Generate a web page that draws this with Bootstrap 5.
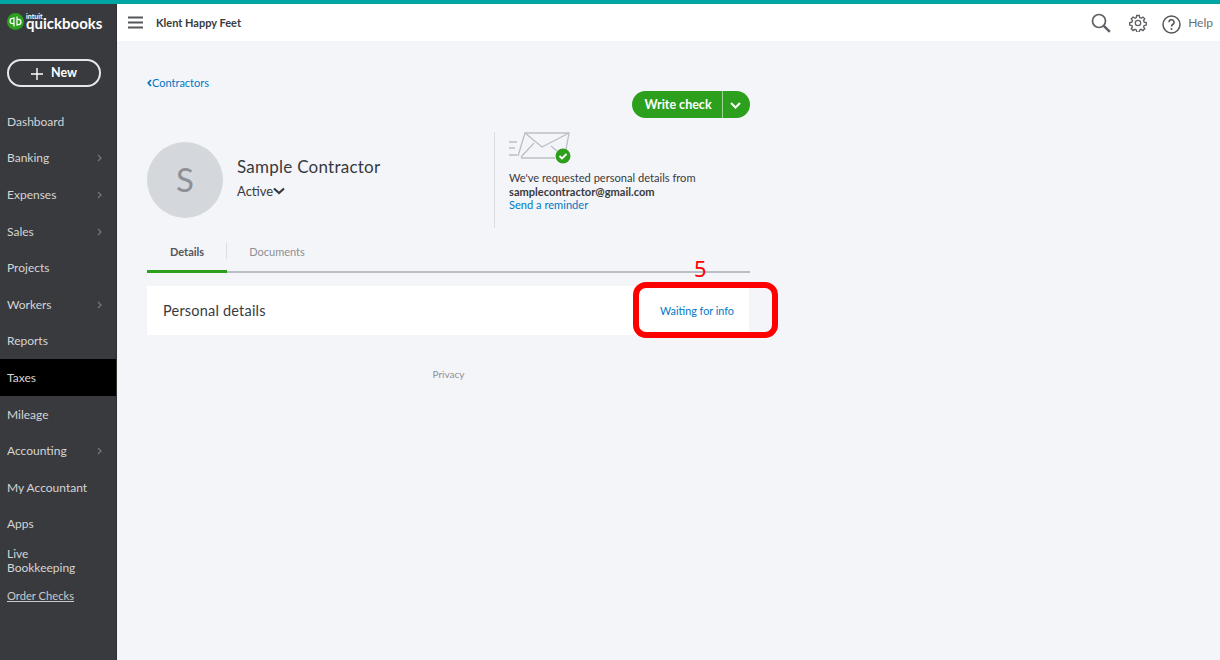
<!DOCTYPE html>
<html lang="en">
<head>
  <meta charset="UTF-8">
  <meta name="viewport" content="width=device-width, initial-scale=1.0">
  <title>Sample Contractor</title>
  <link href="https://cdn.jsdelivr.net/npm/bootstrap@5.3.0/dist/css/bootstrap.min.css" rel="stylesheet">
  <style>
    html, body { height: 100%; margin: 0; overflow: hidden; }
    body { font-family: "Lato", "Liberation Sans", sans-serif; background: #f4f5f8; color: #393a3d; position: relative; }
    .teal-strip { height: 4px; background: #00a6a4; }
    .app-shell { height: 656px; }
    .side-bar { width: 117px; background: #393a3d; border-right: 1px solid #2f3033; }
    .brand-row { height: 37px; padding: 9px 0 0 7px; color: #fff; }
    .qb-word { font-size: 15px; font-weight: 700; line-height: 14px; margin-left: 2px; }
    .qb-intuit { font-size: 7px; line-height: 6px; display: block; font-weight: 700; margin-bottom: -3px; }
    .new-btn { width: 94px; height: 28px; margin: 18px 0 16px 7px; border: 2px solid #e6e7e9; border-radius: 14px; color: #fff; font-size: 12.500px; font-weight: 700; padding: 1px 0 0; }
    .new-btn:hover { color: #fff; }
    .side-link { height: 36.6px; padding: 1px 14px 0 7px; color: #d4d5d7; font-size: 12px; text-decoration: none; }
    .side-link.is-on { background: #000; }
    .side-link.two-line { height: 38px; line-height: 14px; padding-top: 0; }
    .side-foot { color: #c8c9cb; font-size: 11.200px; text-decoration: underline; margin: 8px 0 0 7px; display: block; }
    .top-bar { height: 37px; background: #fff; padding: 0 7px 0 11px; }
    .firm-name { font-size: 11px; font-weight: 700; margin: 2px 0 0 13px; color: #393a3d; }
    .gear-icon { margin: 0 15px 0 18px; }
    .help-word { font-size: 12px; color: #6b6c72; margin-left: 7px; }
    .page-col { width: 603px; margin-left: 30px; }
    .back-link { color: #0077c5; font-size: 11px; text-decoration: none; display: block; line-height: 14px; margin-top: 35px; }
    .write-group { width: 118px; height: 27px; margin-top: 1px; }
    .write-main { background: #2ca01c; color: #fff; border: 0; height: 27px; width: 90px; border-radius: 14px 0 0 14px; font-size: 12.500px; font-weight: 700; padding: 1px 0 0 2px; }
    .write-drop { background: #2ca01c; border: 0; border-left: 1px solid #9ed397; height: 27px; width: 28px; border-radius: 0 14px 14px 0; padding: 0 3px 2px 0; }
    .profile-row { height: 96px; margin-top: 14px; }
    .avatar-disc { width: 76px; height: 76px; border-radius: 50%; background: #d4d7dc; color: #8d9096; font-size: 33px; margin-top: 10px; }
    .who-col { margin-left: 14px; padding-top: 24px; width: 257px; }
    .who-name { font-size: 17px; font-weight: 400; line-height: 22px; margin: 0; letter-spacing: .25px; }
    .who-state { font-size: 13px; line-height: 16px; margin-top: 5px; }
    .ask-col { border-left: 1px solid #dcdde0; padding-left: 14px; font-size: 11.100px; line-height: 13.500px; flex: 1; }
    .ask-col a { color: #0077c5; text-decoration: none; }
    .ask-mail { font-weight: 700; color: #393a3d; }
    .ask-gap { margin-top: 6px; }
    .tab-row { height: 32px; margin-top: 13px; border-bottom: 2px solid #babec5; }
    .tab-item { width: 80px; height: 32px; font-size: 11px; text-align: center; color: #8d9096; padding-top: 3px; }
    .tab-item.is-second { margin-left: 10px; }
    .tab-item.is-on { color: #53555a; font-weight: 700; border-bottom: 3px solid #2ca01c; position: relative; }
    .tab-item.is-on::after { content: ""; position: absolute; right: 0; top: 2px; height: 16px; border-right: 1px solid #dcdde0; }
    .detail-box { height: 49px; background: #fff; margin: 13px 1px 0 0; padding: 1px 15px 0 16px; }
    .detail-title { font-size: 14.500px; letter-spacing: .2px; }
    .wait-link { color: #0077c5; font-size: 10.800px; text-decoration: none; }
    .privacy-line { font-size: 10px; color: #8d9096; text-align: center; margin-top: 32px; }
    .callout-box { position: absolute; left: 633px; top: 282px; width: 145px; height: 56px; border: 6px solid #f00; border-radius: 13px; }
    .callout-num { position: absolute; left: 694px; top: 253px; color: #f00; font-size: 22px; line-height: 30px; font-family: "Noto Sans", sans-serif; }
  </style>
</head>
<body>
  <div class="teal-strip"></div>
  <div class="app-shell d-flex">

    <!-- left nav -->
    <div class="side-bar flex-shrink-0">
      <div class="brand-row d-flex align-items-start">
        <svg width="17" height="17" viewBox="0 0 18 18" class="flex-shrink-0"><circle cx="9" cy="9" r="9" fill="#2ca01c"/><path d="M7.600 5.600H6a2.600 2.600 0 0 0 0 5.600h.8M7.400 4.400v10M10.400 12.400H12a2.600 2.600 0 0 0 0-5.600h-.8M10.600 13.600V3.600" fill="none" stroke="#fff" stroke-width="1.300"/></svg>
        <div class="qb-word"><span class="qb-intuit">intuit</span>quickbooks</div>
      </div>
      <button class="btn new-btn d-flex align-items-center justify-content-center gap-2" type="button">
        <svg width="12" height="12" viewBox="0 0 13 13"><path d="M6.500 0v13M0 6.500h13" stroke="#fff" stroke-width="1.500"/></svg>New
      </button>
      <a class="side-link d-flex align-items-center justify-content-between" href="#">Dashboard</a>
      <a class="side-link d-flex align-items-center justify-content-between" href="#">Banking<svg width="5" height="8" viewBox="0 0 5 8"><path d="M1 1l3 3-3 3" fill="none" stroke="#77787b" stroke-width="1.200"/></svg></a>
      <a class="side-link d-flex align-items-center justify-content-between" href="#">Expenses<svg width="5" height="8" viewBox="0 0 5 8"><path d="M1 1l3 3-3 3" fill="none" stroke="#77787b" stroke-width="1.200"/></svg></a>
      <a class="side-link d-flex align-items-center justify-content-between" href="#">Sales<svg width="5" height="8" viewBox="0 0 5 8"><path d="M1 1l3 3-3 3" fill="none" stroke="#77787b" stroke-width="1.200"/></svg></a>
      <a class="side-link d-flex align-items-center justify-content-between" href="#">Projects</a>
      <a class="side-link d-flex align-items-center justify-content-between" href="#">Workers<svg width="5" height="8" viewBox="0 0 5 8"><path d="M1 1l3 3-3 3" fill="none" stroke="#77787b" stroke-width="1.200"/></svg></a>
      <a class="side-link d-flex align-items-center justify-content-between" href="#">Reports</a>
      <a class="side-link is-on d-flex align-items-center justify-content-between" href="#">Taxes</a>
      <a class="side-link d-flex align-items-center justify-content-between" href="#">Mileage</a>
      <a class="side-link d-flex align-items-center justify-content-between" href="#">Accounting<svg width="5" height="8" viewBox="0 0 5 8"><path d="M1 1l3 3-3 3" fill="none" stroke="#77787b" stroke-width="1.200"/></svg></a>
      <a class="side-link d-flex align-items-center justify-content-between" href="#">My Accountant</a>
      <a class="side-link d-flex align-items-center justify-content-between" href="#">Apps</a>
      <a class="side-link two-line d-flex align-items-center" href="#"><span>Live<br>Bookkeeping</span></a>
      <a class="side-foot" href="#">Order Checks</a>
    </div>

    <div class="flex-grow-1">
      <!-- top bar -->
      <div class="top-bar d-flex align-items-center">
        <svg width="15" height="13" viewBox="0 0 15 13"><path d="M0 1.500h15M0 6.500h15M0 11.500h15" stroke="#55565a" stroke-width="2"/></svg>
        <span class="firm-name">Klent Happy Feet</span>
        <div class="ms-auto d-flex align-items-center">
          <svg width="20" height="20" viewBox="0 0 20 20"><circle cx="8" cy="8" r="6.500" fill="none" stroke="#5f6066" stroke-width="1.700"/><path d="M12.800 12.800l6 6" stroke="#5f6066" stroke-width="2.500"/></svg>
          <svg width="18" height="18" viewBox="0 0 20 20" class="gear-icon"><circle cx="10" cy="10" r="3" fill="none" stroke="#5f6066" stroke-width="1.400"/><path d="M8.500 1.200h3l.5 2.500 1.700.7 2.100-1.400 2.100 2.100-1.400 2.100.7 1.700 2.500.5v3l-2.500.5-.7 1.700 1.400 2.100-2.100 2.100-2.100-1.400-1.700.7-.5 2.500h-3l-.5-2.500-1.700-.7-2.100 1.400-2.100-2.100 1.400-2.100-.7-1.700-2.500-.5v-3l2.500-.5.7-1.700-1.400-2.100 2.100-2.100 2.100 1.400 1.700-.7z" transform="translate(.5 .5) scale(.95)" fill="none" stroke="#5f6066" stroke-width="1.600"/></svg>
          <svg width="19" height="19" viewBox="0 0 19 19" class="mt-1"><circle cx="9.500" cy="9.500" r="8.500" fill="none" stroke="#55565a" stroke-width="1.500"/><path d="M7 7.300a2.500 2.500 0 1 1 3.700 2.200c-.8.500-1.200.9-1.200 1.900" fill="none" stroke="#55565a" stroke-width="1.500"/><circle cx="9.500" cy="14" r="1" fill="#55565a"/></svg>
          <span class="help-word">Help</span>
        </div>
      </div>

      <!-- contractor page -->
      <div class="page-col">
        <a class="back-link" href="#"><svg width="5" height="8" viewBox="0 0 5 8" class="align-baseline"><path d="M4 1L1.300 4 4 7" fill="none" stroke="#0077c5" stroke-width="1.800"/></svg>Contractors</a>
        <div class="write-group d-flex ms-auto">
          <button class="write-main" type="button">Write check</button>
          <button class="write-drop" type="button" aria-label="More"><svg width="11" height="7" viewBox="0 0 11 7"><path d="M1 1l4.500 4.500L10 1" fill="none" stroke="#fff" stroke-width="2"/></svg></button>
        </div>

        <div class="profile-row d-flex">
          <div class="avatar-disc flex-shrink-0 d-flex align-items-center justify-content-center">S</div>
          <div class="who-col">
            <h1 class="who-name">Sample Contractor</h1>
            <div class="who-state d-flex align-items-center">Active
              <svg width="12" height="8" viewBox="0 0 12 8"><path d="M1 1.500l5 4.500 5-4.500" fill="none" stroke="#393a3d" stroke-width="2.200"/></svg>
            </div>
          </div>
          <div class="ask-col">
            <svg width="62" height="33" viewBox="0 0 62 33" class="d-block">
              <g fill="none" stroke="#babec5" stroke-width="1.300">
                <path d="M0 10h8M0 16h6M0 23h8"/>
                <path d="M9 24L16 1h44l-4 22M12 26h34M16 1l17 14L60 1M12 25l13-14M42 14l6 5"/>
              </g>
              <circle cx="54" cy="24" r="7.500" fill="#2ca01c"/>
              <path d="M50.500 24l2.500 2.500 4.500-4.500" fill="none" stroke="#fff" stroke-width="1.800"/>
            </svg>
            <div class="ask-gap">We've requested personal details from</div>
            <div class="ask-mail">samplecontractor@gmail.com</div>
            <a href="#">Send a reminder</a>
          </div>
        </div>

        <div class="tab-row d-flex">
          <div class="tab-item is-on">Details</div>
          <div class="tab-item is-second">Documents</div>
        </div>

        <div class="detail-box d-flex align-items-center justify-content-between">
          <span class="detail-title">Personal details</span>
          <a class="wait-link" href="#">Waiting for info</a>
        </div>

        <div class="privacy-line">Privacy</div>
      </div>
    </div>
  </div>

  <!-- annotation drawn over the page -->
  <div class="callout-num">5</div>
  <div class="callout-box"></div>
</body>
</html>
